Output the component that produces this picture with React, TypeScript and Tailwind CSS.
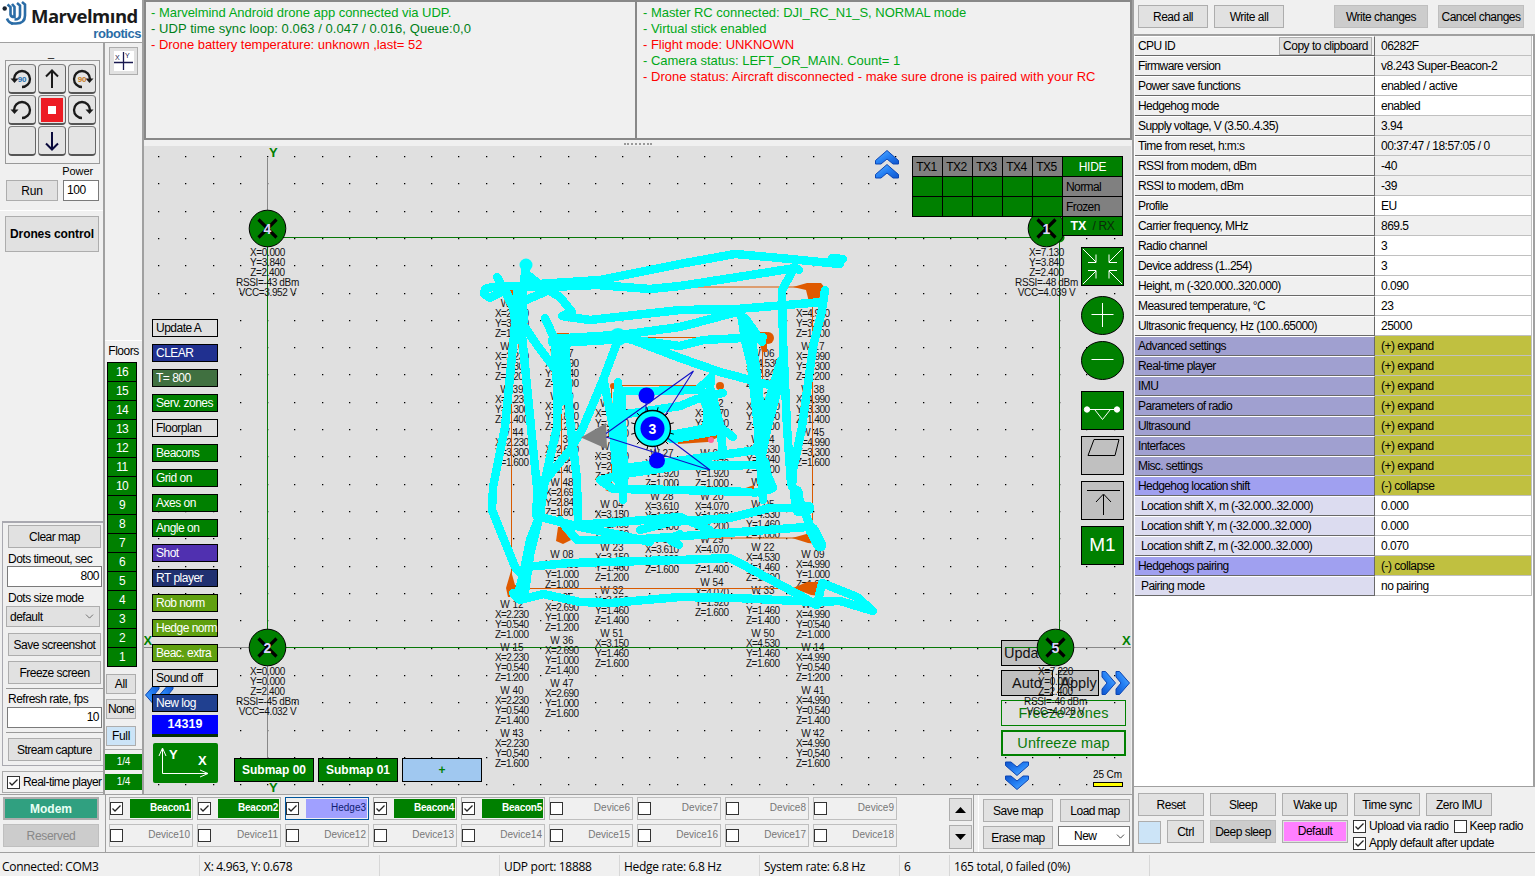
import React from "react";
import { ChevronDown } from "lucide-react";

const SANS = "font-['Liberation_Sans',Arial,sans-serif]";

function Check({ on, x = "" }: { on?: boolean; x?: string }) {
  return (
    <span className={`flex h-[13px] w-[13px] shrink-0 items-center justify-center border border-[#333] bg-white ${x}`}>
      {on && (
        <svg width="11" height="11" viewBox="0 0 11 11" fill="none" stroke="#222" strokeWidth="1.3">
          <path d="M1.5 5.5 4 8 9.5 2.5" />
        </svg>
      )}
    </span>
  );
}

function Btn({ children, className = "" }: { children?: React.ReactNode; className?: string }) {
  return (
    <div className={`flex shrink-0 items-center justify-center whitespace-nowrap border border-[#adadad] ${className}`}>{children}</div>
  );
}

/* ---------- left side ---------- */

function Logo() {
  return (
    <div className="flex h-[42px] w-[142px] shrink-0 bg-white pl-[2px]">
      <svg width="26" height="26" viewBox="0 0 26 26" fill="none" className="mt-[1px] shrink-0">
        <g stroke="#2a6ca6" strokeWidth="2.6">
          <path d="M5.500 3.500l3 2.500v7.500q.3 2.500 4 2.500V6l-2.500-3" />
          <path d="M12.500 18.500q5.500 0 5.500-4.500V4.500l-3-2.500" />
          <path d="M9 22.500h5q9 0 9-8V3.500L20 1" />
          <path d="M5 17.500q1.500 4.500 6 5" />
        </g>
        <circle cx="2.700" cy="7.500" r="2.200" fill="#1b2430" />
      </svg>
      <div className="flex w-[113px] flex-col items-end pt-[6px]">
        <div className="w-[110px] text-[18.500px] leading-[20px] font-bold tracking-[-0.5px] whitespace-nowrap text-[#1a1a1a] font-['Open_Sans','Noto_Sans',sans-serif]">Marvelmınd</div>
        <div className="text-[13px] leading-[15px] font-bold tracking-[-0.45px] text-[#2a6ca6]">robotics</div>
      </div>
    </div>
  );
}

function PadKey({ kind }: { kind: string }) {
  return (
    <div className="flex h-[30px] w-[28px] items-center justify-center rounded-[4px] border border-[#808080] border-r-[#666] border-b-2 border-b-[#555] bg-[#e4e4e4]">
      <svg width="24" height="24" viewBox="0 0 24 24" fill="none" stroke="#1a1a1a" strokeWidth="2">
        {kind === "up" && <path d="M12 21V4M6 9.500l6-6 6 6" />}
        {kind === "down" && <path d="M12 3v17M6 14.500l6 6 6-6" stroke="#0a0a3c" />}
        {kind === "stop" && <><rect x="1" y="0" width="22" height="24" fill="#ed1c24" stroke="none" /><rect x="8" y="8" width="8" height="8" fill="#fff" stroke="none" /></>}
        {(kind === "l90" || kind === "l") && (
          <>
            <path d="M4 12a8 8 0 1 1 8 8" strokeWidth="2.300" />
            <path d="M.5 11.500h8L4.500 16z" fill="#1a1a1a" stroke="none" />
          </>
        )}
        {(kind === "r90" || kind === "r") && (
          <>
            <path d="M20 12a8 8 0 1 0-8 8" strokeWidth="2.300" />
            <path d="M15.500 11.500h8L19.500 16z" fill="#1a1a1a" stroke="none" />
          </>
        )}
        {kind.endsWith("90") && (
          <text x="12" y="15" textAnchor="middle" fontSize="8" fontWeight="bold" fill={kind === "l90" ? "#1f6fb0" : "#c77a1a"} stroke="none">90</text>
        )}
      </svg>
    </div>
  );
}

function LeftControls() {
  return (
    <div className="flex w-[105px] shrink-0 flex-col border-r-2 border-[#a0a0a0] text-[12px] tracking-[-0.1px]">
      <div className="h-[17px] pr-px text-center text-[11px] leading-[20px]">_</div>
      <div className="ml-[5px] grid h-[104px] w-[95px] grid-cols-[28px_28px_28px] content-start gap-x-[2px] gap-y-[1px] border border-[#999] pt-[3px] pl-[2px]">
        {["l90", "up", "r90", "l", "stop", "r", "none", "down", "none"].map((k, i) => <PadKey key={i} kind={k} />)}
      </div>
      <div className="mr-[10px] h-[14px] text-right text-[11px] leading-[14px]">Power</div>
      <div className="flex gap-[5px] pt-[2px] pl-[6px]">
        <Btn className="h-[21px] w-[52px] bg-[#e1e1e1]">Run</Btn>
        <div className="h-[21px] w-[36px] border border-[#7a7a7a] bg-white pl-[3px] leading-[18px] tracking-[-0.4px]">100</div>
      </div>
      <div className="mt-[9px] h-[6px] border-t border-white" />
      <Btn className="ml-[5px] h-[36px] w-[94px] bg-[#e1e1e1] text-[12px] font-bold">Drones control</Btn>
      <div className="grow" />
      <div className="ml-[2px] flex h-[245px] flex-col border-t-2 border-b border-l border-[#a9a9b0] pt-px pl-[3px] text-[12px] tracking-[-0.5px]">
        <Btn className="mt-px ml-[2px] h-[23px] w-[93px] bg-[#e1e1e1]">Clear map</Btn>
        <div className="mt-[4px] ml-[2px] h-[14px] leading-[14px] whitespace-nowrap">Dots timeout, sec</div>
        <div className="ml-px h-[21px] w-[95px] border border-[#7a7a7a] bg-white pr-[2px] text-right leading-[18px]">800</div>
        <div className="mt-[4px] ml-[2px] h-[14px] leading-[14px]">Dots size mode</div>
        <div className="mt-px flex h-[21px] w-[94px] items-center justify-between border border-[#adadad] bg-[#e1e1e1] px-[3px]">default <ChevronDown size={13} strokeWidth={1.3} className="text-[#444]" /></div>
        <Btn className="mt-[6px] ml-[2px] h-[23px] w-[93px] bg-[#e1e1e1]">Save screenshot</Btn>
        <Btn className="mt-[5px] ml-[2px] h-[23px] w-[93px] bg-[#e1e1e1]">Freeze screen</Btn>
        <div className="mt-[4px] h-[4px] border-t border-[#999]" />
        <div className="ml-[2px] h-[15px] leading-[14px] whitespace-nowrap">Refresh rate, fps</div>
        <div className="ml-px h-[21px] w-[95px] border border-[#7a7a7a] bg-white pr-[2px] text-right leading-[18px]">10</div>
        <div className="mt-[4px] h-[6px] border-t border-[#999]" />
        <Btn className="ml-[2px] h-[23px] w-[93px] bg-[#e1e1e1]">Stream capture</Btn>
      </div>
      <div className="mt-[5px] mb-px ml-[2px] flex h-[22px] items-center gap-[3px] border border-r-0 border-[#aaa] pl-[4px] text-[12px] tracking-[-0.55px] whitespace-nowrap"><Check on />Real-time player</div>
    </div>
  );
}

function FloorsColumn() {
  return (
    <div className="flex w-[37px] shrink-0 flex-col">
      <Btn className="mt-[4px] ml-[4px] h-[28px] w-[29px] bg-[#e1e1e1]">
        <svg width="20" height="20" viewBox="0 0 20 20">
          <rect width="20" height="20" fill="#fff" />
          <path d="M9.500 1v18M0 11.500h19" stroke="#191950" strokeWidth="1.300" />
          <text x="1" y="9" fontSize="7" fill="#191950">X</text>
          <text x="11" y="7" fontSize="7" fill="#191950">Y</text>
        </svg>
      </Btn>
      <div className="mt-[265px] h-[22px] border-t border-white text-center text-[12px] leading-[21px] tracking-[-0.5px]">Floors</div>
      <div className="ml-[2px] flex w-[30px] flex-col border border-b-0 border-black">
        {Array.from({ length: 16 }, (_, i) => (
          <div key={i} className="h-[19px] border-b border-black bg-[#008000] text-center text-[12px] leading-[19px] tracking-[-0.6px] text-white">{16 - i}</div>
        ))}
      </div>
      <Btn className="mt-[7px] ml-px h-[20px] w-[30px] bg-[#e1e1e1] text-[12px] tracking-[-0.3px]">All</Btn>
      <Btn className="mt-[5px] ml-px h-[20px] w-[30px] bg-[#e1e1e1] text-[12px] tracking-[-0.7px]">None</Btn>
      <Btn className="mt-[7px] ml-px h-[20px] w-[30px] border-[#00559b] bg-[#cce4f7] text-[12px] tracking-[-0.3px]">Full</Btn>
      <div className="mt-[3px] border-t border-[#aaa]" />
      <div className="mt-[4px] h-[16px] bg-[#008000] text-center text-[10px] leading-[16px] tracking-[-0.2px] text-white">1/4</div>
      <div className="mt-[4px] h-[16px] bg-[#008000] text-center text-[10px] leading-[16px] tracking-[-0.2px] text-white">1/4</div>
    </div>
  );
}

/* ---------- map ---------- */

type Label = [number, number, string, string, string, string];
const block = (cx: number, y: number, x: string, yy: string, names: string[], zs = ["1.000", "1.200", "1.400", "1.600"]): Label[] =>
  names.map((n, i) => [cx, y + i * 43, n, x, yy, zs[i]]);

const LABELS: Label[] = [
  ...block(512, 303, "2.230", "3.300", ["W 11", "W 16", "W 39", "W 44"]),
  ...block(512, 604, "2.230", "0.540", ["W 12", "W 15", "W 40", "W 43"]),
  ...block(562, 353, "2.690", "2.840", ["W 07", "W 20", "W 35", "W 48"]),
  ...block(562, 554, "2.690", "1.000", ["W 08", "W 25", "W 36", "W 47"]),
  ...block(612, 403, "3.150", "2.380", ["W 03", "W 24"]),
  ...block(612, 504, "3.150", "1.460", ["W 04", "W 23", "W 32", "W 51"]),
  ...block(662, 453, "3.610", "1.920", ["W 27", "W 28", "W 53"], ["1.000", "1.400", "1.600"]),
  ...block(712, 403, "4.070", "2.380", ["W 02"]),
  ...block(712, 453, "4.070", "1.920", ["W 01", "W 20", "W 29", "W 54"]),
  ...block(763, 353, "4.530", "2.840", ["W 06", "W 21", "W 34"]),
  ...block(763, 504, "4.530", "1.460", ["W 05", "W 22", "W 33", "W 50"]),
  ...block(813, 303, "4.990", "3.300", ["W 10", "W 17", "W 38", "W 45"]),
  ...block(813, 554, "4.990", "1.000", ["W 09"]),
  ...block(813, 604, "4.990", "0.540", ["W 13", "W 14", "W 41", "W 42"]),
];

const TRAILS = [
  "490,298 484,294 485,289 492,287 513,286 545,287",
  "490,298 502,292",
  "497,277 513,307 518,340",
  "506,292 512,304 526,300 545,292",
  "523,285 600,280 680,264 735,254 780,258 840,264",
  "832,258 843,259",
  "550,287 597,285 650,289 680,286 770,272 795,268 799,270",
  "792,272 782,290 783,340 787,427 791,483 803,508 818,545",
  "526,265 525,273 543,287 560,297 572,312 562,316 590,320 680,310 737,309 823,302",
  "825,290 822,310 813,347 802,427 793,470 792,487",
  "525,273 520,320",
  "516,315 505,427 493,487 492,510 515,567 520,573",
  "520,315 531,427 537,487 538,520 530,540 524,570 518,595",
  "520,320 537,345 555,369",
  "545,318 555,340 558,380 557,427 545,480 540,515 530,555 525,592",
  "565,342 567,375 570,420 577,480 578,525",
  "620,335 680,327 737,312",
  "620,338 680,346 703,340 763,337",
  "625,337 680,358 720,372 773,386",
  "618,340 603,380 582,430 570,450 543,483",
  "604,382 613,427 617,480",
  "618,382 621,427 623,500",
  "618,391 647,391 697,390 710,379",
  "620,415 680,406 697,399 723,393",
  "711,377 706,430",
  "711,390 720,425 723,453",
  "717,425 733,437",
  "741,313 745,340 753,373 758,427 760,460 763,500",
  "745,318 762,342",
  "781,360 773,387 763,420 757,448",
  "783,370 768,425 761,460 773,488 754,493",
  "625,468 670,462 757,450",
  "600,480 630,473 680,466 765,465",
  "600,480 613,489 680,490 750,492",
  "537,516 580,527 620,535 650,542",
  "575,525 620,522 680,517 710,530",
  "640,530 670,522 730,518 770,508 807,508",
  "560,520 577,540 630,540 670,537 807,527",
  "680,534 670,540 679,545",
  "525,567 570,563 680,560 730,558 747,567 803,597 816,605",
  "513,593 520,600 543,594 580,602 610,603 680,597 737,598 817,602 840,601 873,611 857,597 822,583 817,605",
];
const WIDE = ["554,341 620,337", "519,290 522,320", "672,437 715,429", "557,345 560,400", "619,395 622,485", "749,335 754,370 760,425", "705,395 716,428", "763,463 768,488", "541,482 538,514", "796,492 799,510 808,508", "812,530 820,545"];

const ticks = Array.from({ length: 12 }, (_, i) => (i * Math.PI) / 6 + 0.26);

const DOTS = Array.from({ length: 36 }, (_, i) => Math.round(157.9 + i * 27.31))
  .flatMap((x) => Array.from({ length: 24 }, (_, j) => `M${x} ${Math.round(156 + j * 27.31)}h1.3v1.3h-1.3z`))
  .join("");

function Beacon({ x, y, n, lines }: { x: number; y: number; n: string; lines: string[] }) {
  return (
    <g>
      <circle cx={x} cy={y} r="18.300" fill="#008000" stroke="#000" />
      <path d={`M${x - 9} ${y - 9}l18 18M${x + 9} ${y - 9}l-18 18`} stroke="#000" strokeWidth="3.200" />
      <text x={x} y={y + 5} textAnchor="middle" fontSize="14" fontWeight="bold" fill="#dcd8ff">{n}</text>
      <g fontSize="10" letterSpacing="-0.35" textAnchor="middle" fill="#111">
        {lines.map((l, i) => <text key={i} x={x} y={y + 27.5 + i * 10}>{l}</text>)}
      </g>
    </g>
  );
}

function Chevrons({ id, className }: { id: string; className: string }) {
  return (
    <svg width="28" height="30" viewBox="0 0 28 30" className={className}>
      <defs>
        <linearGradient id={id} x1="0" y1="0" x2="1" y2="1">
          <stop offset="0" stopColor="#5fb4ff" /><stop offset="0.5" stopColor="#2580f4" /><stop offset="1" stopColor="#1055cc" />
        </linearGradient>
      </defs>
      <g fill={`url(#${id})`} stroke="#0c46b4" strokeWidth="1" strokeLinejoin="round">
        <path d="M14 .5 25.500 10.500v3.500h-5.500L14 9l-6 5H2.500v-3.500z" />
        <path d="M14 14.500 25.500 24.500v3.500h-5.500L14 23l-6 5H2.500v-3.500z" />
      </g>
    </svg>
  );
}

function MapDrawing() {
  return (
    <svg width="987" height="648" viewBox="144 146 987 648" className="block">
      <rect x="144" y="146" width="987" height="648" fill="#e0e0e0" />
      <path d={DOTS} fill="#000" />
      <path d="M144 647.500h987M267.500 158v624" stroke="#888" />
      <path d="M267.500 647.500v-410h792v410z" fill="none" stroke="#087808" />
      <g fontSize="13" fontWeight="bold" fill="#008000">
        <text x="269" y="157">Y</text><text x="269" y="792">Y</text>
        <text x="143.500" y="645">X</text><text x="1122" y="645">X</text>
      </g>
      <g fontSize="10" textAnchor="middle" fill="#151515">
        {LABELS.map(([cx, y, n, x, yy, z], i) => (
          <g key={i}>
            <text x={cx} y={y + 3.5}>{n}</text>
            <text x={cx} y={y + 13.5} textLength="34">X={x}</text>
            <text x={cx} y={y + 23.5} textLength="34">Y={yy}</text>
            <text x={cx} y={y + 33.5} textLength="34">Z={z}</text>
          </g>
        ))}
        <text x="763" y="485.500">W 49</text>
      </g>
      <path d="M511.500 588v-301H813M812.500 287v251H561.500V337.500H762.500v151H611.500v-103h101v53h-40M511.500 588.500h301" fill="none" stroke="#d95a00" />
      <g fill="#df5a00">
        <path d="M793 287l14-4h14l4 5-8 14h-8l-3-12z" />
        <path d="M507 284l14-2 4 8-14 12-4-8z" />
        <circle cx="768" cy="338" r="6" /><path d="M757 332h10v20h-5z" />
        <path d="M557 333h12v14h-12z" />
        <path d="M511 571l-5 17 2 9h12v-12h-5z" />
        <path d="M792 538l18-5 8 1 6 5-6 5-10-1z" />
        <path d="M793 588l14-6h14v14l-10-1z" />
        <path d="M558 527l-2 14 7 3 8-4-10-13z" />
        <circle cx="613" cy="386" r="3" /><circle cx="720" cy="386" r="4" />
        <path d="M605 490l8-3 7 5-7 1zM740 490l14-5v7z" />
        <path d="M677 440l45-8 1 3-15 7-30 2z" />
      </g>
      <circle cx="711" cy="440" r="3" fill="#f69" />
      <g fill="none" stroke="#0ff" strokeLinecap="round" strokeLinejoin="round" strokeWidth="8.500" shapeRendering="crispEdges">
        {TRAILS.map((p, i) => <polyline key={i} points={p} />)}
        <g strokeWidth="13">{WIDE.map((p, i) => <polyline key={i} points={p} />)}</g>
      </g>
      <circle cx="526" cy="265" r="6.500" fill="#0ff" />
      <circle cx="618" cy="337" r="9" fill="#0ff" />
      <path d="M581 437.500 606 423 607 449z" fill="#808080" />
      <path d="M606 433.500 693.500 371 657 428M606 437 710 470 657 430M646 395v33M652 428l5 32" fill="none" stroke="#1010c8" strokeWidth="1.100" />
      <circle cx="646.500" cy="395.500" r="8" fill="#00f" />
      <circle cx="657" cy="460.500" r="8" fill="#00f" />
      <circle cx="652.500" cy="428.500" r="18" fill="#0ff" stroke="#000" strokeWidth="1.300" />
      <g stroke="#000">
        {ticks.map((a, i) => (
          <path key={i} d={`M${652.5 + 18 * Math.cos(a)} ${428.5 + 18 * Math.sin(a)}L${652.5 + 22 * Math.cos(a)} ${428.5 + 22 * Math.sin(a)}`} />
        ))}
      </g>
      <circle cx="652.500" cy="428.500" r="12" fill="#00f" />
      <text x="652.500" y="433.500" textAnchor="middle" fontSize="14" fontWeight="bold" fill="#fff">3</text>
      <Beacon x={267.5} y={228.5} n="4" lines={["X=0.000", "Y=3.840", "Z=2.400", "RSSI=-43 dBm", "VCC=3.952 V"]} />
      <Beacon x={267.5} y={647.5} n="2" lines={["X=0.000", "Y=0.000", "Z=2.400", "RSSI=-45 dBm", "VCC=4.032 V"]} />
      <circle cx="1059.500" cy="237.500" r="5" fill="#008000" />
      <Beacon x={1046.5} y={228.5} n="1" lines={["X=7.130", "Y=3.840", "Z=2.400", "RSSI=-48 dBm", "VCC=4.039 V"]} />
    </svg>
  );
}

const MENU: [string, string][] = [
  ["Update A", "bg-[#e0e0e0] text-black"],
  ["CLEAR", "bg-[#203090] text-white"],
  ["T= 800", "bg-[#407040] text-white"],
  ["Serv. zones", "bg-[#008000] text-white"],
  ["Floorplan", "bg-[#e0e0e0] text-black"],
  ["Beacons", "bg-[#008000] text-white"],
  ["Grid on", "bg-[#008000] text-white"],
  ["Axes on", "bg-[#008000] text-white"],
  ["Angle on", "bg-[#008000] text-white"],
  ["Shot", "bg-[#5030b0] text-white"],
  ["RT player", "bg-[#203070] text-white"],
  ["Rob norm", "bg-[#60a010] text-white"],
  ["Hedge norm", "bg-[#60a010] text-white"],
  ["Beac. extra", "bg-[#60a010] text-white"],
  ["Sound off", "bg-[#e0e0e0] text-black"],
  ["New log", "bg-[#204090] text-white"],
];

function MapArea() {
  const tool = "h-[39px] w-[43px] border border-black";
  return (
    <div className="relative h-[648px] w-[987px] overflow-hidden">
      <MapDrawing />
      <Chevrons id="cu" className="absolute top-[4px] left-[729px]" />
      <Chevrons id="cl" className="absolute top-[534px] left-[2px] -rotate-90" />
      <Chevrons id="cr" className="absolute top-[522px] left-[957px] rotate-90" />
      <Chevrons id="cd" className="absolute top-[614px] left-[859px] rotate-180" />

      <div className="absolute top-[173px] left-[8px] flex w-[66px] flex-col gap-[7px]">
        {MENU.map(([t, c]) => (
          <div key={t} className={`h-[18px] border border-black pl-[3px] text-[12px] leading-[16px] tracking-[-0.5px] whitespace-nowrap ${c}`}>{t}</div>
        ))}
      </div>
      <div className="absolute top-[569px] left-[8px] flex w-[66px] flex-col">
        <div className="h-[22px] border-b-[3px] border-[#062f06] bg-[#00f] text-center text-[12.500px] leading-[18px] font-bold text-white">14319</div>
        <svg width="65" height="40" viewBox="0 0 65 40" className="mt-[6px] ml-px rounded-[2px] bg-[#008000]">
          <path d="M9.500 6v24.500h45M6 13l3.500-8 3.500 8M47 27l8 3.500-8 3.500" fill="none" stroke="#fff" />
          <g fontSize="13" fontWeight="bold" fill="#fff"><text x="16" y="16">Y</text><text x="45" y="22">X</text></g>
        </svg>
      </div>

      <div className="absolute top-[612px] left-[90px] flex gap-[4px] text-[12px] font-bold tracking-[0px]">
        <div className="h-[24px] w-[80px] border border-black bg-[#008000] text-center leading-[23px] text-white">Submap 00</div>
        <div className="h-[24px] w-[80px] border border-black bg-[#008000] text-center leading-[23px] text-white">Submap 01</div>
        <div className="h-[24px] w-[80px] border border-black bg-[#a0c8f0] text-center leading-[23px] text-[#008000]">+</div>
      </div>

      <div className="absolute top-[10px] left-[768px] flex w-[211px] flex-col text-[12px]">
        <div className="grid grid-cols-[repeat(5,29px)_59px] gap-px border border-black bg-black">
          {["TX1", "TX2", "TX3", "TX4", "TX5"].map((t) => (
            <div key={t} className="h-[19px] bg-[#808080] pr-[2px] text-center text-[12px] leading-[20px] tracking-[-0.5px]">{t}</div>
          ))}
          <div className="h-[19px] bg-[#008000] text-center text-[12px] leading-[20px] tracking-[-0.3px] text-white">HIDE</div>
          {Array.from({ length: 5 }, (_, i) => <div key={i} className="h-[19px] bg-[#008000]" />)}
          <div className="h-[19px] bg-[#808080] pl-[3px] leading-[20px] tracking-[-0.6px]">Normal</div>
          {Array.from({ length: 5 }, (_, i) => <div key={i + 5} className="h-[19px] bg-[#008000]" />)}
          <div className="h-[19px] bg-[#808080] pl-[3px] leading-[20px] tracking-[-0.6px]">Frozen</div>
        </div>
        <div className="flex h-[19px] w-[61px] items-center justify-center gap-[6px] self-end border border-t-0 border-black bg-[#008000]">
          <b className="text-[12.500px] text-white">TX</b><span className="text-[12px] tracking-[-0.3px] text-[#0a2a0a]">/ RX</span>
        </div>
      </div>

      <div className="absolute top-[101px] left-[937px] flex w-[43px] flex-col gap-[6px]">
        <svg className={`${tool} bg-[#008000]`} viewBox="0 0 41 37" fill="none" stroke="#fff">
          <path d="M1 1l13 13M14 6.500v8H6M40 1 27 14M27 6.500v8h8M1 36l13-13M14 30.500v-8H6M40 36 27 23M27 30.500v-8h8" />
        </svg>
        <svg className="mt-[4px] h-[39px] w-[43px]" viewBox="0 0 43 39"><ellipse cx="21.500" cy="19.500" rx="21" ry="19" fill="#008000" stroke="#000" /><path d="M10.500 18.500h22M21.500 7v24" stroke="#fff" /></svg>
        <svg className="h-[39px] w-[43px]" viewBox="0 0 43 39"><ellipse cx="21.500" cy="19.500" rx="21" ry="19" fill="#008000" stroke="#000" /><path d="M10.500 18.500h22" stroke="#fff" /></svg>
        <svg className={`${tool} mt-[5px] bg-[#008000]`} viewBox="0 0 41 37" fill="none" stroke="#fff">
          <path d="M5 17.500h30M13 18l7.500 9.500L28 18" /><circle cx="5" cy="17.500" r="2.700" fill="#fff" /><circle cx="35" cy="17.500" r="2.700" fill="#fff" />
        </svg>
        <svg className={`${tool} bg-[#c0c0c0]`} viewBox="0 0 41 37" fill="none" stroke="#000"><path d="M12 2.500h25l-4 16H6z" /></svg>
        <svg className={`${tool} bg-[#c0c0c0]`} viewBox="0 0 41 37" fill="none" stroke="#000"><path d="M5 8.500h33M21.500 33V13M14 20l7.500-8 7.500 8" /></svg>
        <div className={`${tool} bg-[#008000] text-center text-[19px] leading-[35px] text-white`}>M1</div>
      </div>

      <div className="absolute top-[494px] left-[857px] flex w-[125px] flex-col gap-[4px] text-[14.500px]">
        <div className="h-[26px] w-[52px] border border-black bg-[#c0c0c0] pl-[2px] leading-[25px] text-[#111]">Upda</div>
        <div className="flex gap-[5px]">
          <div className="h-[26px] w-[52px] border border-black bg-[#c0c0c0] text-center leading-[25px] text-[#111]">Auto</div>
          <div className="h-[26px] w-[41px] border border-black bg-[#c0c0c0] text-center leading-[25px] text-[#111]">Apply</div>
        </div>
        <div className="h-[26px] border border-[#008000] text-center leading-[24px] tracking-[0.200px] text-[#0a7a0a]">Freeze zones</div>
        <div className="h-[26px] border-2 border-[#008000] text-center leading-[22px] tracking-[0.100px] text-[#0a7a0a]">Unfreeze map</div>
      </div>

      <div className="absolute top-[622px] left-[949px] flex flex-col text-[10px] leading-[13px]">
        <div className="tracking-[-0.1px]">25 Cm</div>
        <div className="mt-px h-[5px] w-[30px] border border-black bg-[#ff0]" />
      </div>

      <svg width="100" height="100" viewBox="1005 625 100 100" className="absolute top-[479px] left-[861px]">
        <path d="M1005 647.500h50" stroke="#087808" />
        <Beacon x={1055.5} y={647.5} n="5" lines={["X=7.220", "Y=0.000", "Z=2.400", "RSSI=-46 dBm", "VCC=4.028 V"]} />
      </svg>
    </div>
  );
}

/* ---------- bottom ---------- */

function Device({ name, on, sel }: { name: string; on?: boolean; sel?: boolean }) {
  const tone = on ? "bg-[#008000] font-bold tracking-[-0.25px] text-white" : sel ? "bg-[#a0a0ff] text-[#102070]" : "text-[#777]";
  return (
    <div className={`flex h-[23px] w-[84px] items-center border bg-[#f0f0f0] py-px pr-px ${sel ? "border-[#00559b]" : on ? "border-[#adadad]" : "border-[#bfbfbf]"}`}>
      <Check on={on || sel} />
      <div className={`ml-[7px] h-[19px] grow pr-px text-right text-[10px] leading-[18px] ${tone}`}>{name}</div>
    </div>
  );
}

function BottomBar() {
  return (
    <div className="flex h-[59px] w-[1132px] border-t border-b border-[#a0a0a0]">
      <div className="flex w-[106px] flex-col gap-[4px] border-r border-[#a0a0a0] pt-[2px] pl-[3px]">
        <Btn className="h-[23px] w-[96px] border-2 bg-[#30a080] text-[12px] font-bold text-[#e8fff4]">Modem</Btn>
        <Btn className="h-[23px] w-[96px] border-[#bfbfbf] bg-[#ccc] text-[12px] tracking-[-0.3px] text-[#888]">Reserved</Btn>
      </div>
      <div className="grid w-[843px] grid-cols-[repeat(9,84px)] content-start gap-x-[4px] gap-y-[4px] pt-[2px] pl-[3px]">
        {Array.from({ length: 18 }, (_, i) => {
          const on = [0, 1, 3, 4].includes(i);
          return <Device key={i} name={on ? `Beacon${i + 1}` : i === 2 ? "Hedge3" : `Device${i + 1}`} on={on} sel={i === 2} />;
        })}
      </div>
      <div className="flex w-[25px] flex-col gap-[4px] border-r border-[#a0a0a0] pt-[3px]">
        <Btn className="h-[23px] w-[23px] bg-[#e1e1e1]"><svg width="11" height="6"><path d="M0 6 5.500 0 11 6z" /></svg></Btn>
        <Btn className="h-[24px] w-[23px] bg-[#e1e1e1]"><svg width="11" height="6"><path d="M0 0 5.500 6 11 0z" /></svg></Btn>
      </div>
      <div className="ml-[4px] grid w-[153px] grid-cols-[70px_72px] content-start gap-x-[5px] gap-y-[4px] border-l border-white pt-[4px] pl-[4px] text-[12px] tracking-[-0.5px]">
        <Btn className="h-[23px] w-[70px] bg-[#e1e1e1]">Save map</Btn>
        <Btn className="ml-[2px] h-[23px] w-[70px] bg-[#e1e1e1]">Load map</Btn>
        <Btn className="h-[23px] w-[70px] bg-[#e1e1e1]">Erase map</Btn>
        <div className="flex h-[20px] w-[72px] items-center justify-between border border-[#7a7a7a] bg-white pr-[2px] pl-[15px]">New <ChevronDown size={13} strokeWidth={1.3} /></div>
      </div>
    </div>
  );
}

/* ---------- right panel ---------- */

const PROPS: [string, string, string][] = [
  ["CPU ID", "06282F", "r"], ["Firmware version", "v8.243 Super-Beacon-2", "r"],
  ["Power save functions", "enabled / active", "w"], ["Hedgehog mode", "enabled", "w"],
  ["Supply voltage, V (3.50..4.35)", "3.94", "r"], ["Time from reset, h:m:s", "00:37:47 / 18:57:05 / 0", "r"],
  ["RSSI from modem, dBm", "-40", "r"], ["RSSI to modem, dBm", "-39", "r"],
  ["Profile", "EU", "w"], ["Carrier frequency, MHz", "869.5", "r"],
  ["Radio channel", "3", "w"], ["Device address (1..254)", "3", "w"],
  ["Height, m (-320.000..320.000)", "0.090", "w"], ["Measured temperature, °C", "23", "w"],
  ["Ultrasonic frequency, Hz (100..65000)", "25000", "w"],
  ["Advanced settings", "(+) expand", "g"], ["Real-time player", "(+) expand", "g"], ["IMU", "(+) expand", "g"],
  ["Parameters of radio", "(+) expand", "g"], ["Ultrasound", "(+) expand", "g"], ["Interfaces", "(+) expand", "g"],
  ["Misc. settings", "(+) expand", "g"], ["Hedgehog location shift", "(-) collapse", "o"],
  ["Location shift X, m (-32.000..32.000)", "0.000", "s"], ["Location shift Y, m (-32.000..32.000)", "0.000", "s"],
  ["Location shift Z, m (-32.000..32.000)", "0.070", "s"], ["Hedgehogs pairing", "(-) collapse", "o"], ["Pairing mode", "no pairing", "s"],
];
const LEFT_TONE: Record<string, string> = { r: "pl-[3px] bg-[#f0f0f0]", w: "pl-[3px] bg-[#f0f0f0]", g: "pl-[3px] bg-[#a0a0d0]", o: "pl-[3px] bg-[#a0a0f0]", s: "bg-[#dcdcf0] pl-[6px]" };
const RIGHT_TONE: Record<string, string> = { r: "bg-[#f0f0f0]", w: "bg-white", g: "bg-[#c0c040]", o: "bg-[#c0c040]", s: "bg-white" };

function RightPanel() {
  return (
    <div className="flex h-[853px] w-[403px] flex-col border-b border-l-2 border-[#a0a0a0] text-[12px] tracking-[-0.5px]">
      <div className="flex h-[34px] pt-[5px] pl-[4px]">
        <Btn className="h-[23px] w-[70px] bg-[#e1e1e1]">Read all</Btn>
        <Btn className="ml-[6px] h-[23px] w-[70px] bg-[#e1e1e1]">Write all</Btn>
        <Btn className="ml-[50px] h-[23px] w-[94px] border-[#bfbfbf] bg-[#ccc]">Write changes</Btn>
        <Btn className="ml-[10px] h-[23px] w-[86px] border-[#bfbfbf] bg-[#ccc]">Cancel changes</Btn>
      </div>
      <div className="h-[753px] border-t-2 border-r-2 border-b border-[#a0a0a0] bg-white">
        {PROPS.map(([k, v, t]) => (
          <div key={k} className="flex h-[20px] w-[398px] text-[12px] leading-[18px] tracking-[-0.6px]">
            <div className={`ml-px flex w-[240px] shrink-0 justify-between border-t border-r border-b border-t-white border-r-[#696969] border-b-[#696969] ${LEFT_TONE[t]}`}>
              {k}
              {k === "CPU ID" && <Btn className="mr-[2px] h-[18px] w-[93px] bg-[#e1e1e1] tracking-[-0.5px]">Copy to clipboard</Btn>}
            </div>
            <div className={`grow border-r border-b border-[#c0c0c0] pt-px pl-[6px] tracking-[-0.5px] ${RIGHT_TONE[t]}`}>{v}</div>
          </div>
        ))}
      </div>
      <div className="flex gap-[6px] pt-[6px] pl-[4px]">
        {["Reset", "Sleep", "Wake up", "Time sync", "Zero IMU"].map((t) => <Btn key={t} className="h-[23px] w-[66px] bg-[#e1e1e1]">{t}</Btn>)}
      </div>
      <div className="flex pt-[4px] pl-[4px]">
        <Btn className="mt-px h-[23px] w-[23px] border-[#00559b] bg-[#cce4f7]" />
        <Btn className="ml-[6px] h-[23px] w-[37px] bg-[#e1e1e1]">Ctrl</Btn>
        <Btn className="ml-[6px] h-[23px] w-[66px] border-[#bfbfbf] bg-[#ccc]">Deep sleep</Btn>
        <div className="ml-[6px] h-[23px] w-[66px] border border-[#adadad] bg-[#e1e1e1] p-px"><div className="h-full bg-[#ff80ff] text-center leading-[19px]">Default</div></div>
        <div className="ml-[5px] flex flex-col gap-[4px] leading-[13px] tracking-[-0.45px] whitespace-nowrap">
          <div className="flex gap-[3px]"><Check on />Upload via radio<Check x="ml-[2px]" />Keep radio</div>
          <div className="flex gap-[3px]"><Check on />Apply default after update</div>
        </div>
      </div>
    </div>
  );
}

const STATUS: [string, string][] = [
  ["w-[200px] pl-[2px]", "Connected: COM3"], ["w-[180px] pl-[4px]", "X: 4.963, Y: 0.678"], ["w-[120px]", ""],
  ["w-[120px] pl-[4px]", "UDP port: 18888"], ["w-[140px] pl-[4px]", "Hedge rate: 6.8 Hz"], ["w-[140px] pl-[4px]", "System rate: 6.8 Hz"],
  ["w-[50px] pl-[4px]", "6"], ["w-[200px] pl-[4px]", "165 total, 0 failed (0%)"],
];

export default function App() {
  return (
    <div className={`flex h-[876px] w-[1535px] flex-col overflow-hidden bg-[#f0f0f0] text-black ${SANS}`}>
      <div className="flex h-[853px]">
        <div className="flex w-[1132px] shrink-0 flex-col">
          <div className="flex h-[794px]">
            <div className="flex w-[144px] shrink-0 flex-col border-r-2 border-[#a0a0a0]">
              <Logo />
              <div className="flex h-[752px] border-t border-[#a0a0a0]">
                <LeftControls />
                <FloorsColumn />
              </div>
            </div>
            <div className="flex w-[988px] flex-col">
              <div className="flex h-[140px] text-[13px] leading-[16px] tracking-[-0.03px] whitespace-nowrap">
                <div className="w-[493px] border-2 border-[#888] pt-[3px] pl-[5px]">
                  <div className="text-[#00a818]">- Marvelmind Android drone app connected via UDP.</div>
                  <div className="tracking-[0.07px] text-[#008018]">- UDP time sync loop: 0.063 / 0.047 / 0.016, Queue:0,0</div>
                  <div className="text-[#f00]">- Drone battery temperature: unknown ,last= 52</div>
                </div>
                <div className="w-[495px] border-2 border-l-0 border-[#888] pt-[3px] pl-[6px]">
                  <div className="text-[#00a818]">- Master RC connected: DJI_RC_N1_S, NORMAL mode</div>
                  <div className="text-[#00a818]">- Virtual stick enabled</div>
                  <div className="text-[#f00]">- Flight mode: UNKNOWN</div>
                  <div className="text-[#00a818]">- Camera status: LEFT_OR_MAIN. Count= 1</div>
                  <div className="tracking-[0.04px] text-[#f00]">- Drone status: Aircraft disconnected - make sure drone is paired with your RC</div>
                </div>
              </div>
              <div className="flex h-[6px] justify-center pt-[3px]"><div className="h-0 w-[28px] border-t-2 border-dotted border-[#999]" /></div>
              <MapArea />
            </div>
          </div>
          <BottomBar />
        </div>
        <RightPanel />
      </div>
      <div className="flex h-[23px] items-stretch pt-[2px] text-[12px] leading-[23px] tracking-[-0.3px] font-['Open_Sans','Noto_Sans',sans-serif]">
        {STATUS.map(([c, t], i) => <div key={i} className={`shrink-0 border-r border-[#d7d7d7] whitespace-nowrap ${c}`}>{t}</div>)}
      </div>
    </div>
  );
}
